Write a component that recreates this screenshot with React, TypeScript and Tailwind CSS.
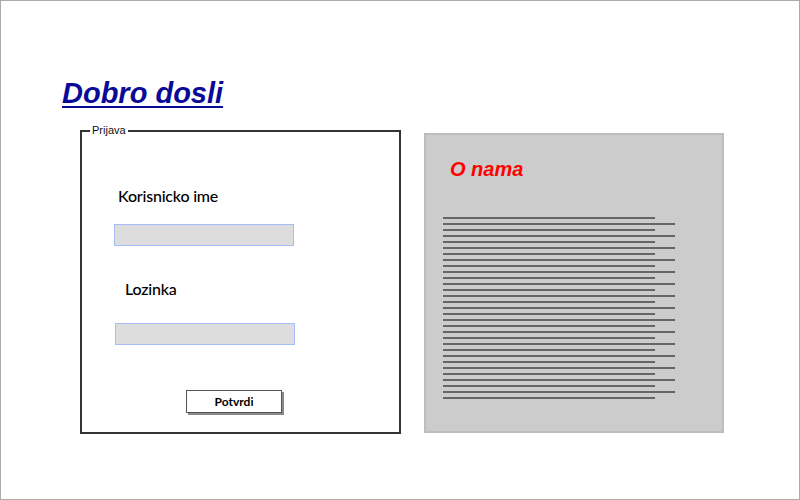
import React from 'react';

const lines = Array.from({ length: 31 }, (_, i) => i);

const App: React.FC = () => {
  return (
    <div className="w-[800px] h-[500px] border border-[#ababab] bg-white pt-[75px] font-['Liberation_Sans',Arial,sans-serif]">
      <h1 className="ml-[61px] text-[29px] leading-[34px] font-bold italic text-[#0a0a99] underline decoration-2 underline-offset-[3px]">
        Dobro dosli
      </h1>

      <div className="ml-[79px] mt-[14px] flex items-start gap-[23px]">
        <fieldset className="w-[321px] h-[310px] border-2 border-[#333333] flex flex-col">
          <legend className="ml-[8px] px-[2px] text-[11px] leading-[13px] text-[#111]">Prijava</legend>

          <label className="mt-[49px] ml-[36px] text-[16px] leading-[20px] text-black font-medium font-['Lato',sans-serif] tracking-[-0.2px]">
            Korisnicko ime
          </label>
          <input
            type="text"
            className="mt-[18px] ml-[32px] w-[180px] h-[22px] bg-[#dddddd] border border-[#a6bdf7] outline-none"
          />

          <label className="mt-[33px] ml-[43px] text-[16px] leading-[20px] text-black font-medium font-['Lato',sans-serif] tracking-[-0.2px]">
            Lozinka
          </label>
          <input
            type="password"
            className="mt-[24px] ml-[33px] w-[180px] h-[22px] bg-[#dddddd] border border-[#a6bdf7] outline-none"
          />

          <button className="mt-[45px] ml-[104px] w-[96px] h-[23px] bg-white border border-[#555] shadow-[2px_2px_0_#888] text-[12px] font-bold text-black font-['Lato',sans-serif]">
            Potvrdi
          </button>
        </fieldset>

        <div className="mt-[9px] w-[300px] h-[300px] bg-[#cccccc] border-2 border-[#bdbdbd] pl-[17px]">
          <h2 className="mt-[22px] ml-[7px] text-[20px] leading-[24px] font-bold italic text-[#ff0000]">O nama</h2>
          <div className="mt-[36px] flex flex-col gap-[4px]">
            {lines.map((i) => (
              <div key={i} className={`h-[2px] bg-[#666666] ${i % 2 === 0 ? 'w-[212px]' : 'w-[232px]'}`} />
            ))}
          </div>
        </div>
      </div>
    </div>
  );
};

export default App;
